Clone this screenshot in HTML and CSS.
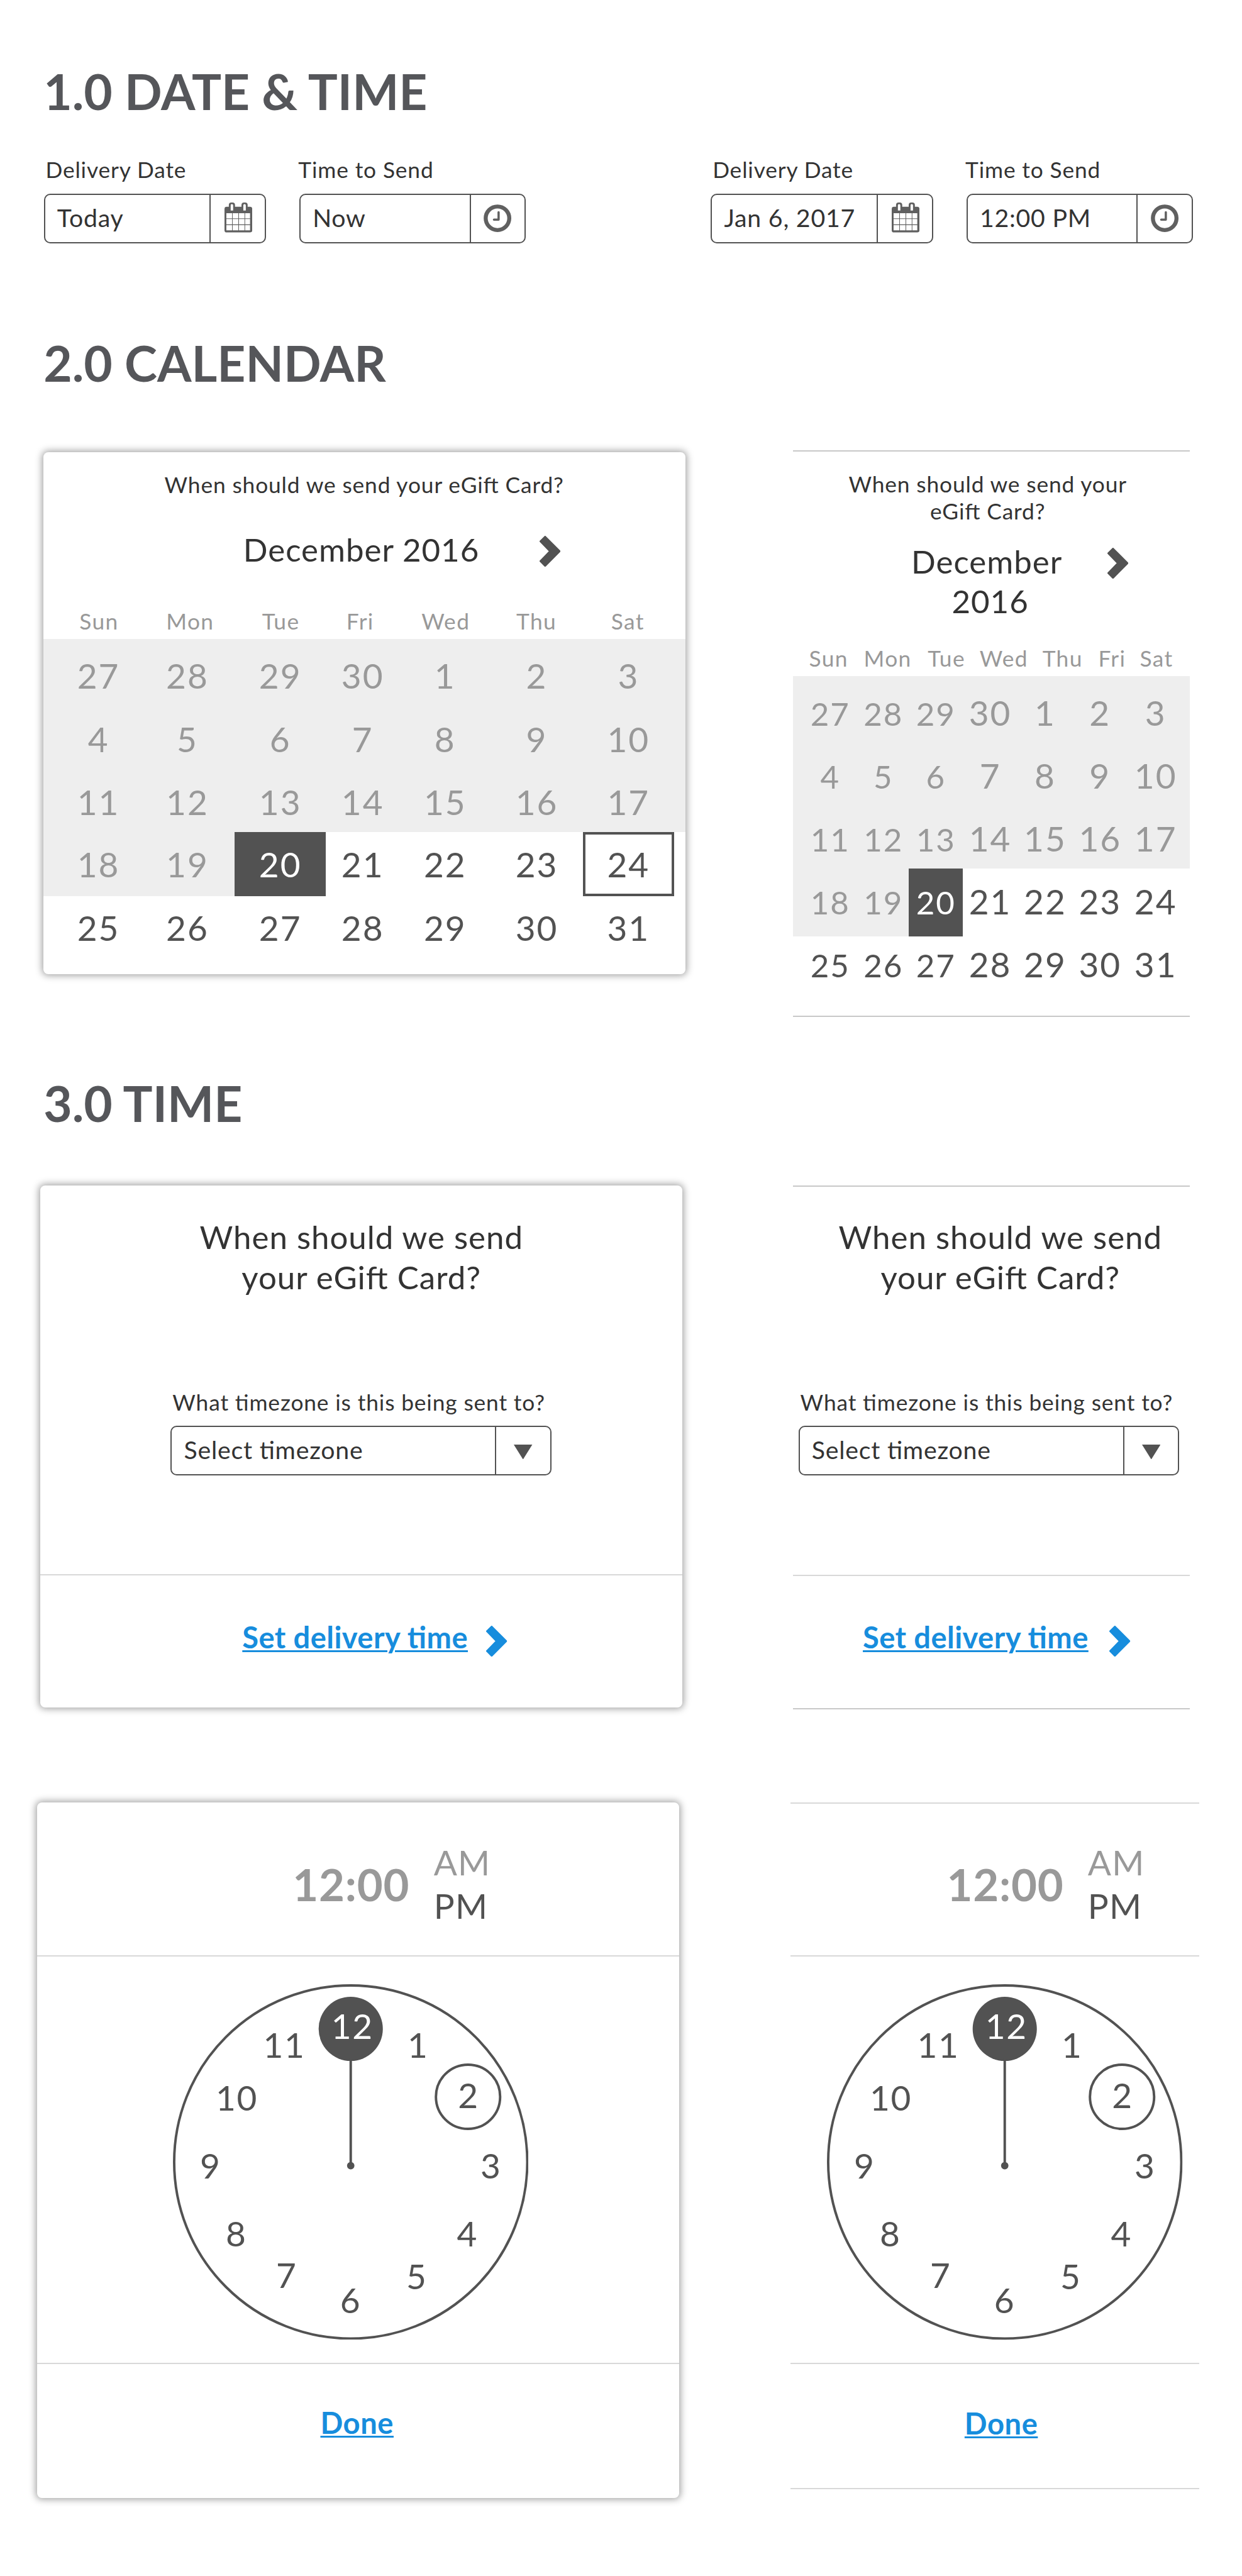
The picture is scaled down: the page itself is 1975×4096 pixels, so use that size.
FILE: index.html
```html
<!DOCTYPE html>
<html lang="en">
<head>
<meta charset="utf-8">
<title>Date, calendar and time components</title>
<link rel="stylesheet" href="styles.css">
</head>
<body>
<svg class="defs" aria-hidden="true">
  <symbol id="chevron" viewBox="0 0 34 50">
    <path d="M9 1.5 32.5 25 9 48.5 1.5 41 17 25 1.5 9Z" fill="currentColor" stroke="currentColor" stroke-width="3" stroke-linejoin="round"/>
  </symbol>
  <symbol id="calendar" viewBox="0 0 45 49">
    <rect y="7" width="45" height="41.5" rx="3.5" fill="currentColor"/>
    <rect x="7" y="0" width="10" height="16" rx="4" fill="currentColor"/>
    <rect x="27.5" y="0" width="10" height="16" rx="4" fill="currentColor"/>
    <path fill="#fff" d="M10 4.5a2 2 0 0 1 4 0V13h-4zM30.500 4.500a2 2 0 0 1 4 0V13h-4zM3 17.200h9.200v8.500H3zM13.200 17.200h9.200v8.500h-9.200zM23.400 17.200h9v8.500h-9zM33.400 17.200h8v8.500h-8zM3 26.800h9.200v8.700H3zM13.200 26.800h9.200v8.700h-9.200zM23.400 26.800h9v8.700h-9zM33.400 26.800h8v8.700h-8zM3 36.700h9.200V45H3zM13.200 36.700h9.200V45h-9.200zM23.400 36.700h9V45h-9zM33.400 36.700h8V45h-8z"/>
  </symbol>
  <symbol id="clock" viewBox="0 0 45 45">
    <circle cx="22.500" cy="22.500" r="19.100" fill="none" stroke="currentColor" stroke-width="6.500"/>
    <path d="M24.300 12.800V24.700H16.800" fill="none" stroke="currentColor" stroke-width="3.600" stroke-linecap="round" stroke-linejoin="round"/>
  </symbol>
  <symbol id="face" viewBox="0 0 576 576">
    <circle cx="288" cy="288" r="286" fill="none" stroke="#525252" stroke-width="4"/>
    <circle cx="288" cy="72.300" r="52" fill="#525252"/>
    <circle cx="478" cy="182.300" r="52" fill="none" stroke="#525252" stroke-width="4"/>
    <path d="M288 120V294" stroke="#525252" stroke-width="4"/>
    <circle cx="288" cy="293.900" r="6" fill="#525252"/>
  </symbol>
</svg>

<main class="page">
  <section>
    <h1 class="heading">1.0 DATE &amp; TIME</h1>
    <div class="row row--fields">
      <div class="pair">
        <div class="field-group field-group--date">
          <div class="label">Delivery Date</div>
          <div class="field"><span class="value">Today</span><span class="addon"><svg class="ico-cal"><use href="#calendar"/></svg></span></div>
        </div>
        <div class="field-group field-group--time">
          <div class="label">Time to Send</div>
          <div class="field"><span class="value">Now</span><span class="addon"><svg class="ico-clock"><use href="#clock"/></svg></span></div>
        </div>
      </div>
      <div class="pair">
        <div class="field-group field-group--date">
          <div class="label">Delivery Date</div>
          <div class="field"><span class="value">Jan 6, 2017</span><span class="addon"><svg class="ico-cal"><use href="#calendar"/></svg></span></div>
        </div>
        <div class="field-group field-group--time">
          <div class="label">Time to Send</div>
          <div class="field"><span class="value">12:00 PM</span><span class="addon"><svg class="ico-clock"><use href="#clock"/></svg></span></div>
        </div>
      </div>
    </div>
  </section>

  <section class="sec-calendar">
    <h2 class="heading">2.0 CALENDAR</h2>
    <div class="row row--calendar">
      <div class="card cal">
        <p class="prompt">When should we send your eGift Card?</p>
        <div class="month"><span class="month-name">December 2016</span><svg class="chevron"><use href="#chevron"/></svg></div>
        <div class="weekdays"><span>Sun</span><span>Mon</span><span>Tue</span><span>Fri</span><span>Wed</span><span>Thu</span><span>Sat</span></div>
        <div class="weeks">
          <div class="week past"><span>27</span><span>28</span><span>29</span><span>30</span><span>1</span><span>2</span><span>3</span></div>
          <div class="week past"><span>4</span><span>5</span><span>6</span><span>7</span><span>8</span><span>9</span><span>10</span></div>
          <div class="week past"><span>11</span><span>12</span><span>13</span><span>14</span><span>15</span><span>16</span><span>17</span></div>
          <div class="week"><span class="past">18</span><span class="past">19</span><span class="selected">20</span><span>21</span><span>22</span><span>23</span><span class="focus">24</span></div>
          <div class="week"><span>25</span><span>26</span><span>27</span><span>28</span><span>29</span><span>30</span><span>31</span></div>
        </div>
      </div>
      <div class="panel cal cal--narrow">
        <p class="prompt">When should we send your<br>eGift Card?</p>
        <div class="month"><span class="month-name">December<br><span class="year">2016</span></span><svg class="chevron"><use href="#chevron"/></svg></div>
        <div class="weekdays"><span>Sun</span><span>Mon</span><span>Tue</span><span>Wed</span><span>Thu</span><span>Fri</span><span>Sat</span></div>
        <div class="weeks">
          <div class="week past"><span><small>27</small></span><span><small>28</small></span><span><small>29</small></span><span>30</span><span>1</span><span>2</span><span>3</span></div>
          <div class="week past"><span><small>4</small></span><span><small>5</small></span><span><small>6</small></span><span>7</span><span>8</span><span>9</span><span>10</span></div>
          <div class="week past"><span><small>11</small></span><span><small>12</small></span><span><small>13</small></span><span>14</span><span>15</span><span>16</span><span>17</span></div>
          <div class="week"><span class="past"><small>18</small></span><span class="past"><small>19</small></span><span class="selected"><small>20</small></span><span>21</span><span>22</span><span>23</span><span>24</span></div>
          <div class="week"><span><small>25</small></span><span><small>26</small></span><span><small>27</small></span><span>28</span><span>29</span><span>30</span><span>31</span></div>
        </div>
      </div>
    </div>
  </section>

  <section class="sec-time">
    <h2 class="heading">3.0 TIME</h2>
    <div class="row row--zone">
      <div class="card zone">
        <div class="zone-body">
          <p class="question">When should we send<br>your eGift Card?</p>
          <div class="zone-field">
            <div class="label">What timezone is this being sent to?</div>
            <div class="field"><span class="value">Select timezone</span><span class="addon"><svg class="ico-caret" viewBox="0 0 30 24"><path d="M0 0H30L15 24Z" fill="currentColor"/></svg></span></div>
          </div>
        </div>
        <div class="zone-action"><a class="link">Set delivery time</a><svg class="chevron"><use href="#chevron"/></svg></div>
      </div>
      <div class="panel zone zone--narrow">
        <div class="zone-body">
          <p class="question">When should we send<br>your eGift Card?</p>
          <div class="zone-field">
            <div class="label">What timezone is this being sent to?</div>
            <div class="field"><span class="value">Select timezone</span><span class="addon"><svg class="ico-caret" viewBox="0 0 30 24"><path d="M0 0H30L15 24Z" fill="currentColor"/></svg></span></div>
          </div>
        </div>
        <div class="zone-action"><a class="link">Set delivery time</a><svg class="chevron"><use href="#chevron"/></svg></div>
      </div>
    </div>

    <div class="row row--picker">
      <div class="card picker">
        <div class="picker-head"><span class="time">12:00</span><span class="ampm"><span class="am">AM</span><span>PM</span></span></div>
        <div class="picker-face">
          <svg class="dial" viewBox="0 0 576 576"><use href="#face"/>
            <text class="on" x="290.500" y="88.500">12</text><text x="396.900" y="119">1</text><text x="478.700" y="201">2</text><text x="515" y="315">3</text><text x="477" y="425.200">4</text><text x="395" y="494">5</text><text x="287.800" y="533">6</text><text x="184" y="492.500">7</text><text x="102.600" y="424.400">8</text><text x="60.900" y="315">9</text><text x="103.300" y="204.800">10</text><text x="180.200" y="119">11</text>
          </svg>
        </div>
        <div class="picker-foot"><a class="link">Done</a></div>
      </div>
      <div class="panel picker picker--narrow">
        <div class="picker-head"><span class="time">12:00</span><span class="ampm"><span class="am">AM</span><span>PM</span></span></div>
        <div class="picker-face">
          <svg class="dial" viewBox="0 0 576 576"><use href="#face"/>
            <text class="on" x="290.500" y="88.500">12</text><text x="396.900" y="119">1</text><text x="478.700" y="201">2</text><text x="515" y="315">3</text><text x="477" y="425.200">4</text><text x="395" y="494">5</text><text x="287.800" y="533">6</text><text x="184" y="492.500">7</text><text x="102.600" y="424.400">8</text><text x="60.900" y="315">9</text><text x="103.300" y="204.800">10</text><text x="180.200" y="119">11</text>
          </svg>
        </div>
        <div class="picker-foot"><a class="link">Done</a></div>
      </div>
    </div>
  </section>
</main>
</body>
</html>
```
FILE: styles.css
```css
/* 1rem = 10 design units */
html { font-size: 9.817px; }

*, *::before, *::after { box-sizing: border-box; }

body {
  margin: 0;
  background: #fff;
  color: #333;
  font-family: Lato, "Liberation Sans", sans-serif;
  font-feature-settings: "liga" 1;
}

p, h1, h2 { margin: 0; font-weight: 400; }
svg { display: block; flex: none; }
.defs { position: absolute; width: 0; height: 0; }

.page {
  height: 417.2rem;
  padding: 9.9rem 0 0 6rem;
  overflow: hidden;
}

.heading {
  height: 9.6rem;
  padding: .1rem 0 0 1.05rem;
  font-size: 8rem;
  font-weight: 700;
  line-height: 9.6rem;
  color: #55565a;
}

.row { display: flex; align-items: flex-start; }

/* ---------- form fields ---------- */
.row--fields { margin-top: 5.7rem; padding-left: 1.1rem; gap: 29.95rem; }
.pair { display: flex; gap: 5.4rem; }
.field-group--date { width: 36rem; }
.field-group--time { width: 36.7rem; }

.label {
  height: 4.4rem;
  padding-top: .06rem;
  font-size: 3.6rem;
  line-height: 4.4rem;
  letter-spacing: .088rem;
  white-space: nowrap;
}
.field-group .label { margin-bottom: 1.8rem; }
.field-group--date .label { margin-left: .28rem; }
.field-group--time .label { margin-left: -.18rem; }

.field {
  display: flex;
  height: 8rem;
  border: 2px solid #525252;
  border-radius: 1rem;
}
.value {
  flex: 1;
  padding: 1.22rem 0 0 1.95rem;
  font-size: 4rem;
  line-height: 4.8rem;
  letter-spacing: .078rem;
  white-space: nowrap;
}
.addon {
  display: flex;
  width: 8.95rem;
  align-items: center;
  justify-content: center;
  border-left: 2px solid #525252;
  color: #606060;
}
.ico-cal { width: 4.5rem; height: 4.9rem; margin: -.2rem 0 0 .2rem; }
.ico-clock { width: 4.5rem; height: 4.5rem; }
.ico-caret { width: 3rem; height: 2.4rem; margin-top: .4rem; color: #525252; }

/* ---------- containers ---------- */
.card {
  width: 104rem;
  border-radius: .8rem;
  background: #fff;
  box-shadow: 0 0 1.2rem .12rem rgba(0, 0, 0, .38);
}
.panel { border: solid #c8c8c8; border-width: 2px 0; }
.chevron { width: 3.4rem; height: 5rem; color: #525252; }

/* ---------- calendar ---------- */
.sec-calendar { margin-top: 14.5rem; }
.row--calendar { margin-top: 9.4rem; padding-left: 1rem; gap: 17.5rem; }
.card.cal { height: 84.6rem; margin-top: .3rem; padding-top: 3.06rem; }

.prompt {
  font-size: 3.6rem;
  line-height: 4.45rem;
  letter-spacing: .088rem;
  text-align: center;
}
.month { display: flex; margin: 5.2rem 0 0 32.4rem; }
.month-name {
  width: 48rem;
  font-size: 5.2rem;
  line-height: 6.4rem;
  letter-spacing: .1rem;
}
.month .chevron { margin-top: .85rem; }

.weekdays {
  display: grid;
  grid-template-columns: 13.7rem 15.8rem 13.6rem 12.1rem 15.6rem 13.8rem 15.8rem;
  margin-top: 6.13rem;
  padding-left: 2.2rem;
  font-size: 3.6rem;
  line-height: 4.4rem;
  letter-spacing: .14rem;
  text-align: center;
  color: #999;
}
.weeks { margin-top: .71rem; }
.week {
  display: grid;
  grid-template-columns: 15.7rem 15.3rem 14.8rem 11.9rem 14.8rem 14.9rem 16.6rem;
  font-size: 5.6rem;
  line-height: 6.7rem;
  letter-spacing: .2rem;
  text-align: center;
  color: #525252;
}
.week > :first-child { padding-left: 2.2rem; }
.week > :last-child { padding-right: 1.8rem; }
.week.past, .week .past { background: #eee; color: #999; }
.week > .selected { background: #525252; color: #fff; }
.week > .focus { margin-right: 1.8rem; padding-right: 0; box-shadow: inset 0 0 0 .4rem #525252; }

.week:nth-child(1) { height: 10.86rem; }
.week:nth-child(2) { height: 10.42rem; }
.week:nth-child(3) { height: 9.94rem; }
.week:nth-child(4) { height: 10.4rem; }
.week:nth-child(5) { height: 10.1rem; }
.week:nth-child(1) > span { padding-top: 2.65rem; }
.week:nth-child(2) > span { padding-top: 2rem; }
.week:nth-child(3) > span { padding-top: 1.76rem; }
.week:nth-child(4) > span { padding-top: 1.99rem; }
.week:nth-child(5) > span { padding-top: 1.84rem; }

.cal--narrow { width: 64.2rem; height: 91.8rem; padding-top: 3.05rem; }
.cal--narrow .prompt { padding-right: 1.2rem; }
.cal--narrow .month { margin: 2.8rem 0 0 18.9rem; }
.cal--narrow .month-name { width: 24.9rem; margin-right: 7.1rem; text-align: center; }
.cal--narrow .year { padding-left: 1.1rem; }
.cal--narrow .weekdays {
  grid-template-columns: 9.6rem 9.52rem 9.52rem 9.08rem 9.94rem 6.1rem 8.28rem;
  margin-top: 3.75rem;
  padding-left: .94rem;
}
.cal--narrow .week { grid-template-columns: 10.5rem 8.2rem 8.8rem 8.8rem 9rem 8.8rem 10rem; }
.cal--narrow .week > :first-child { padding-left: 1.5rem; }
.cal--narrow .week > :last-child { padding-right: .8rem; }
.cal--narrow .week:nth-child(1) { height: 10.84rem; }
.cal--narrow .week:nth-child(2) { height: 10.34rem; }
.cal--narrow .week:nth-child(3) { height: 9.98rem; }
.cal--narrow .week:nth-child(4) { height: 11.02rem; }
.cal--narrow .week:nth-child(1) > span { padding-top: 2.61rem; }
.cal--narrow .week:nth-child(2) > span { padding-top: 1.98rem; }
.cal--narrow .week:nth-child(3) > span { padding-top: 1.8rem; }
.cal--narrow .week:nth-child(4) > span { padding-top: 2.05rem; }
.cal--narrow .week:nth-child(5) > span { padding-top: 1.25rem; }
.cal--narrow small { font-size: 5.2rem; line-height: 1; }

/* ---------- timezone ---------- */
.sec-time { margin-top: 9.1rem; }
.row--zone { margin-top: 8.6rem; padding-left: .55rem; gap: 17.95rem; }
.zone { height: 84.6rem; }
.zone-body { height: 63.2rem; padding-top: 5.13rem; border-bottom: 2px solid #d8d8d8; }
.question {
  font-size: 5.2rem;
  line-height: 6.47rem;
  letter-spacing: .1rem;
  text-align: center;
}
.zone-field { width: 61.7rem; margin: 14.79rem 0 0 21.1rem; }
.zone-field .label { margin: 0 0 1.7rem .3rem; }
.zone-action { display: flex; padding: 7.08rem 0 0 32.7rem; gap: 3rem; }
.zone-action .chevron { margin-top: 1rem; color: #178ddd; }
.link {
  font-size: 4.8rem;
  font-weight: 700;
  line-height: 5.8rem;
  letter-spacing: .042rem;
  color: #178ddd;
  text-decoration: underline;
  text-decoration-thickness: .27rem;
  text-underline-offset: .35rem;
}
.zone--narrow { width: 64.2rem; height: 84.9rem; }
.zone--narrow .zone-body { padding-top: 4.95rem; height: 63.1rem; }
.zone--narrow .question { padding-left: 2.9rem; }
.zone--narrow .zone-field { margin-left: .84rem; }
.zone--narrow .zone-action { padding-left: 11.27rem; gap: 3.4rem; padding-top: 7.05rem; }

/* ---------- time picker ---------- */
.row--picker { margin-top: 15.1rem; gap: 18.05rem; }
.picker { height: 112.6rem; }
.picker-head {
  display: flex;
  height: 24.9rem;
  padding: 6.16rem 0 0 41.4rem;
  border-bottom: 2px solid #d8d8d8;
}
.time {
  width: 22.85rem;
  padding-top: 2.76rem;
  font-size: 7.2rem;
  font-weight: 700;
  line-height: 8.6rem;
  letter-spacing: .08rem;
  color: #999;
}
.ampm {
  display: flex;
  flex-direction: column;
  font-size: 5.6rem;
  line-height: 7.03rem;
  letter-spacing: .13rem;
  color: #525252;
}
.am { color: #999; }
.picker-face { height: 66rem; padding: 4.48rem 0 0 22rem; border-bottom: 2px solid #d8d8d8; }
.dial { width: 57.6rem; height: 57.6rem; }
.dial text { font-size: 56px; letter-spacing: 1.5px; text-anchor: middle; fill: #525252; }
.dial .on { fill: #fff; }
.picker-foot { display: flex; padding: 6.68rem 0 0 45.9rem; }
.picker-foot .link { letter-spacing: .055rem; }
.picker--narrow { width: 66.2rem; height: 111.2rem; border-color: #d8d8d8; }
.picker--narrow .picker-head { height: 24.75rem; padding: 5.98rem 0 0 25.3rem; }
.picker--narrow .picker-face { padding-left: 5.95rem; }
.picker--narrow .picker-foot { padding-left: 28.2rem; }
```
